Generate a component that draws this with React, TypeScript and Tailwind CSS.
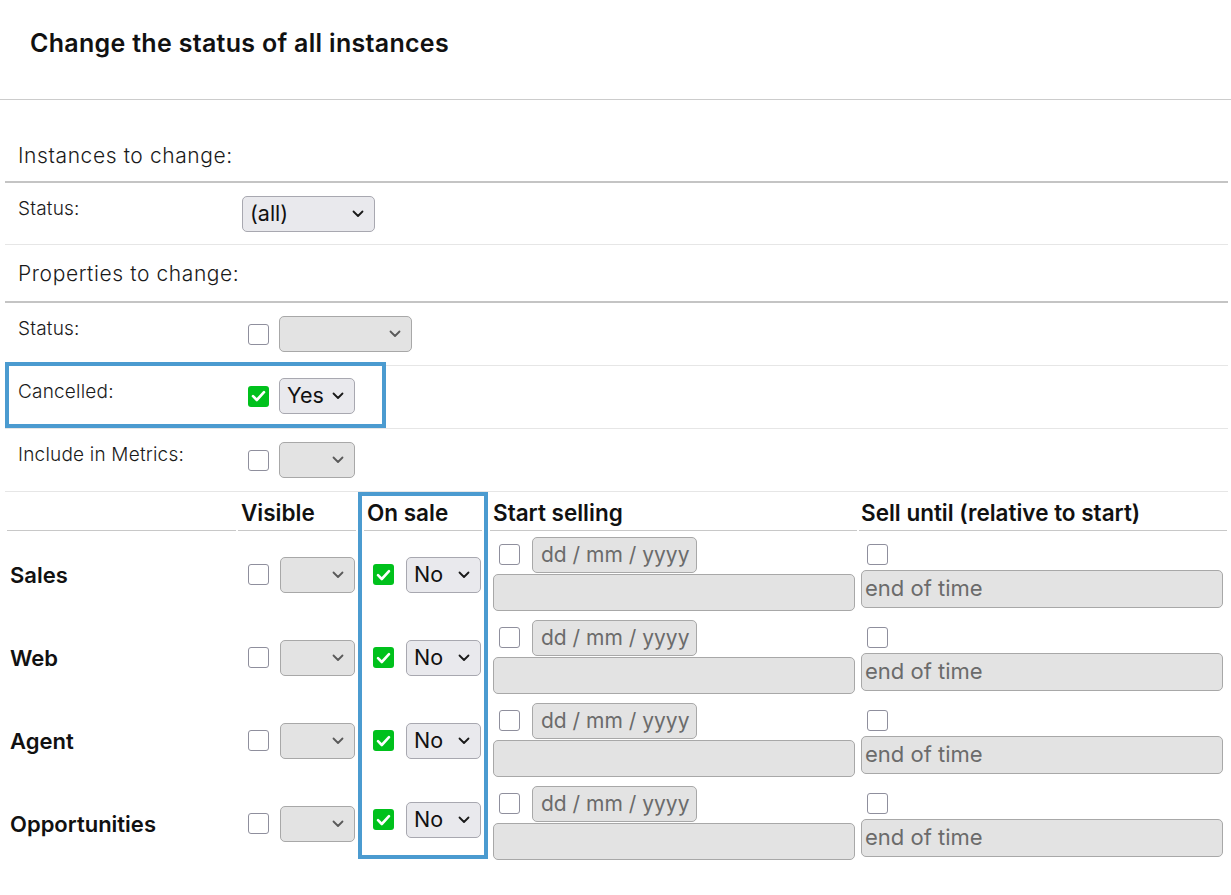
import React from 'react';

const FONT = { fontFamily: 'Inter, "Noto Sans", sans-serif' };

const Chevron: React.FC<{ muted?: boolean }> = ({ muted }) => (
  <svg width="12" height="8" viewBox="0 0 12 8" className="shrink-0">
    <path
      d="M1.5 1.5 L6 6 L10.5 1.5"
      fill="none"
      stroke={muted ? '#5a5a5a' : '#1a1a1a'}
      strokeWidth="1.8"
      strokeLinecap="round"
      strokeLinejoin="round"
    />
  </svg>
);

const Select: React.FC<{ value?: string; width: string; disabled?: boolean }> = ({ value, width, disabled }) => (
  <div
    className={`${width} h-[36px] rounded-[5px] border flex items-center justify-between pl-[7px] pr-[10px] text-[21.5px] leading-none text-[#111] ${
      disabled ? 'bg-[#e3e3e3] border-[#a8a8a8]' : 'bg-[#e9e9ed] border-[#a8a8b0]'
    }`}
  >
    <span>{value}</span>
    <Chevron muted={disabled} />
  </div>
);

const Checkbox: React.FC<{ checked?: boolean }> = ({ checked }) =>
  checked ? (
    <div className="w-[21px] h-[21px] rounded-[3px] bg-[#00c11c] flex items-center justify-center shrink-0">
      <svg width="15" height="12" viewBox="0 0 15 12">
        <path d="M2 6.2 L5.8 10 L13 2.2" fill="none" stroke="#fff" strokeWidth="2.6" strokeLinecap="round" strokeLinejoin="round" />
      </svg>
    </div>
  ) : (
    <div className="w-[21px] h-[21px] rounded-[3px] bg-white border border-[#8f8f9d] shrink-0" />
  );

const SectionHeading: React.FC<{ children: React.ReactNode; className?: string }> = ({ children, className }) => (
  <div
    className={`flex items-center pl-[13px] border-b-2 border-[#c4c4c4] text-[21px] font-light tracking-[0.6px] text-[#1a1a1a] ${className ?? ''}`}
  >
    {children}
  </div>
);

const FieldRow: React.FC<{ label: string; children: React.ReactNode; boxed?: boolean; className?: string }> = ({
  label,
  children,
  boxed,
  className,
}) => (
  <div className={`relative flex border-b border-[#e6e6e6] ${className ?? ''}`}>
    <div className="w-[237px] shrink-0 pl-[13px] pt-[14px] text-[19px] font-light tracking-[0.2px] leading-[24px] text-[#1a1a1a]">
      {label}
    </div>
    <div className="flex items-start pt-[13px]">{children}</div>
    {boxed && <div className="absolute left-0 top-[-4px] w-[381px] bottom-0 border-4 border-[#4b9bd0] pointer-events-none" />}
  </div>
);

const channels = ['Sales', 'Web', 'Agent', 'Opportunities'];

const OnSaleBorder = 'border-x-4 border-[#4b9bd0]';
const headCell = 'h-[39px] border-b border-[#c8c8c8] flex items-end pb-[0px] text-[22.5px] font-semibold text-[#111]';

export default function App() {
  return (
    <div className="w-[1231px] h-[895px] bg-white overflow-hidden" style={FONT}>
      {/* Header */}
      <div className="h-[100px] border-b border-[#cccccc] pl-[30px] pt-[27px]">
        <h1 className="text-[25px] font-semibold tracking-[0.3px] text-[#111] leading-[32px]">Change the status of all instances</h1>
      </div>

      <div className="px-[5px] mr-[-2px] pt-[30px]">
        <SectionHeading className="h-[53px]">Instances to change:</SectionHeading>
        <FieldRow label="Status:" className="h-[62px]">
          <Select value="(all)" width="w-[133px]" />
        </FieldRow>

        <SectionHeading className="h-[58px] pt-[2px]">Properties to change:</SectionHeading>
        <FieldRow label="Status:" className="h-[63px]">
          <div className="flex items-center h-[36px] pl-[6px] gap-[10px]">
            <Checkbox />
            <Select width="w-[133px]" disabled />
          </div>
        </FieldRow>
        <FieldRow label="Cancelled:" className="h-[63px]" boxed>
          <div className="flex items-center h-[36px] pl-[6px] gap-[10px] mt-[-1px]">
            <Checkbox checked />
            <Select value="Yes" width="w-[76px]" />
          </div>
        </FieldRow>
        <FieldRow label="Include in Metrics:" className="h-[63px]">
          <div className="flex items-center h-[36px] pl-[6px] gap-[10px]">
            <Checkbox />
            <Select width="w-[76px]" disabled />
          </div>
        </FieldRow>
      </div>

      {/* Channel table */}
      <div className="ml-[7px] grid grid-cols-[229px_118px_130px_367px_368px] gap-x-[2px]">
        <div className="h-[39px] border-b border-[#c8c8c8]" />
        <div className={`${headCell} pl-[3px]`}>Visible</div>
        <div className={`h-[39px] border-t-4 ${OnSaleBorder} px-[2px]`}>
          <div className={`${headCell} h-full pl-[3px]`}>On sale</div>
        </div>
        <div className={`${headCell} pl-[3px]`}>Start selling</div>
        <div className={`${headCell} pl-[2px] whitespace-nowrap`}>Sell until (relative to start)</div>

        {channels.map((name, i) => {
          const last = i === channels.length - 1;
          return (
            <React.Fragment key={name}>
              <div className="h-[83px] flex items-center pl-[3px] pt-[6px] text-[22px] font-semibold text-[#111]">{name}</div>
              <div className="h-[83px] flex items-center pl-[10px] pt-[4px] gap-[11px]">
                <Checkbox />
                <Select width="w-[75px]" disabled />
              </div>
              <div className={`${last ? 'h-[79px] border-b-4' : 'h-[83px]'} ${OnSaleBorder} flex items-center pl-[11px] pt-[4px] gap-[12px]`}>
                <Checkbox checked />
                <Select value="No" width="w-[75px]" />
              </div>
              <div className="h-[83px] flex flex-col justify-center pt-[2px]">
                <div className="flex items-center gap-[12px] pl-[9px] h-[36px]">
                  <Checkbox />
                  <div className="w-[165px] h-[36px] rounded-[5px] border border-[#a8a8a8] bg-[#e3e3e3] flex items-center pl-[8px] text-[21px] text-[#6b6b6b] whitespace-nowrap">
                    dd / mm / yyyy
                  </div>
                </div>
                <div className="ml-[3px] mt-[1px] w-[362px] h-[37px] rounded-[5px] border border-[#a8a8a8] bg-[#e3e3e3]" />
              </div>
              <div className="h-[83px] flex flex-col justify-center pt-[6px]">
                <div className="pl-[8px]">
                  <Checkbox />
                </div>
                <div className="ml-[2px] mt-[5px] w-[362px] h-[38px] rounded-[5px] border border-[#a8a8a8] bg-[#e3e3e3] flex items-center pl-[3px] text-[22px] text-[#6b6b6b]">
                  end of time
                </div>
              </div>
            </React.Fragment>
          );
        })}
      </div>
    </div>
  );
}
